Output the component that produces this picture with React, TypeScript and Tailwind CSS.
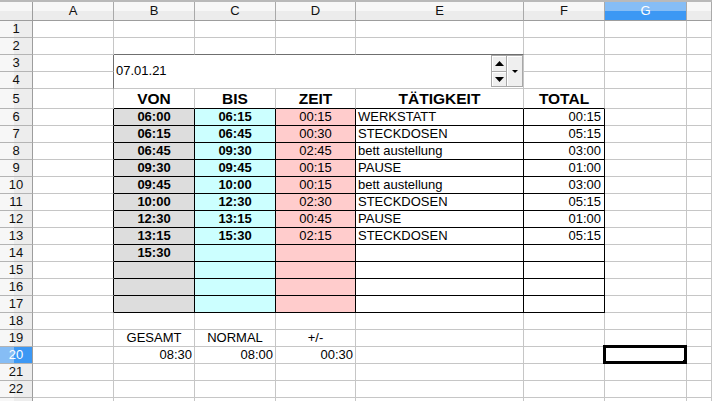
import React from "react";

const COLS = ["A", "B", "C", "D", "E", "F", "G", "H"];

const FONT = "font-['Liberation_Sans',Arial,sans-serif]";

const rows = [
  ["06:00", "06:15", "00:15", "WERKSTATT", "00:15"],
  ["06:15", "06:45", "00:30", "STECKDOSEN", "05:15"],
  ["06:45", "09:30", "02:45", "bett austellung", "03:00"],
  ["09:30", "09:45", "00:15", "PAUSE", "01:00"],
  ["09:45", "10:00", "00:15", "bett austellung", "03:00"],
  ["10:00", "12:30", "02:30", "STECKDOSEN", "05:15"],
  ["12:30", "13:15", "00:45", "PAUSE", "01:00"],
  ["13:15", "15:30", "02:15", "STECKDOSEN", "05:15"],
  ["15:30", "", "", "", ""],
  ["", "", "", "", ""],
  ["", "", "", "", ""],
  ["", "", "", "", ""],
];

function Tri({ dir, w, h }: { dir: "up" | "down"; w: number; h: number }) {
  const d = dir === "up" ? `M0 ${h} L${w / 2} 0 L${w} ${h}Z` : `M0 0 L${w / 2} ${h} L${w} 0Z`;
  return (
    <svg width={w} height={h} viewBox={`0 0 ${w} ${h}`}>
      <path d={d} fill="#000" />
    </svg>
  );
}

function DateBox() {
  return (
    <div className="col-span-4 row-span-2 flex border-r border-b border-r-[#c6c6c6] border-b-[#c6c6c6] bg-white">
      <div className="flex h-[32px] w-full">
        <div className="flex flex-1 items-center pl-[2px] text-[13px] text-black">07.01.21</div>
        <div className="flex h-full w-[32px] gap-px bg-[#a8a8a8] p-px">
          <div className="flex w-[14px] flex-col gap-px">
            <div className="flex flex-1 items-center justify-center border-t border-l border-white bg-[#efefef]">
              <Tri dir="up" w={9} h={5} />
            </div>
            <div className="flex flex-1 items-center justify-center border-t border-l border-white bg-[#efefef]">
              <Tri dir="down" w={9} h={5} />
            </div>
          </div>
          <div className="flex flex-1 items-center justify-center border-t border-l border-white bg-[#efefef]">
            <Tri dir="down" w={6} h={3} />
          </div>
        </div>
      </div>
    </div>
  );
}

function cellFor(r: number, c: number): { cls: string; text?: string } {
  // c: 0=A .. 7=H
  let right = "border-r-[#c6c6c6]";
  let bottom = "border-b-[#c6c6c6]";
  let bg = "bg-white";
  let align = "justify-center";
  let weight = "font-normal";
  let size = "text-[13px]";
  let text = "";

  if (r >= 6 && r <= 17) {
    const row = rows[r - 6];
    if (c === 0) right = "border-r-black";
    if (c >= 1 && c <= 5) {
      right = "border-r-black";
      bottom = "border-b-black";
      text = row[c - 1];
      if (c === 1) {
        bg = "bg-[#dddddd]";
        weight = "font-bold";
      }
      if (c === 2) {
        bg = "bg-[#ccffff]";
        weight = "font-bold";
      }
      if (c === 3) bg = "bg-[#ffcccc]";
      if (c === 4) align = "justify-start pl-[2px]";
      if (c === 5) align = "justify-end pr-[3px]";
    }
  }
  if (r === 5 && c >= 1 && c <= 5) {
    bottom = "border-b-black";
    text = ["VON", "BIS", "ZEIT", "TÄTIGKEIT", "TOTAL"][c - 1];
    weight = "font-bold";
    size = "text-[15.5px]";
  }
  if (r === 2 && c >= 1 && c <= 4) bottom = "border-b-[#6f6f6f]";
  if ((r === 3 || r === 4) && c === 0) right = "border-r-[#6f6f6f]";
  if (r === 19 && c >= 1 && c <= 3) text = ["GESAMT", "NORMAL", "+/-"][c - 1];
  if (r === 20 && c >= 1 && c <= 3) {
    text = ["08:30", "08:00", "00:30"][c - 1];
    align = "justify-end pr-[2px]";
  }

  return { cls: `${right} ${bottom} ${bg} ${align} ${weight} ${size}`, text };
}

export default function App() {
  const cells: React.ReactNode[] = [];

  // column header row
  cells.push(
    <div
      key="corner"
      className="border-r border-b border-r-[#9d9d9d] border-b-[#9d9d9d] bg-[linear-gradient(to_bottom,#f7f7f7_50%,#ececec_50%)]"
    />
  );
  COLS.forEach((col) => {
    const sel = col === "G";
    cells.push(
      <div
        key={`h-${col}`}
        className={`flex items-center justify-center border-r border-b border-r-[#a9a9a9] border-b-[#9d9d9d] text-[13px] ${
          sel
            ? "bg-[linear-gradient(to_bottom,#86bdf5_50%,#3c98f4_50%)] text-white"
            : "bg-[linear-gradient(to_bottom,#f7f7f7_50%,#ececec_50%)] text-[#111]"
        }`}
      >
        {col !== "H" && col}
      </div>
    );
  });

  for (let r = 1; r <= 23; r++) {
    const sel = r === 20;
    cells.push(
      <div
        key={`rh-${r}`}
        className={`flex items-center justify-center border-r border-b border-r-[#9d9d9d] border-b-[#b4b4b4] text-[13px] ${
          sel
            ? "bg-[linear-gradient(to_right,#86bdf5_45%,#3c98f4_45%)] text-white"
            : "bg-[linear-gradient(to_right,#f7f7f7_45%,#ededed_45%)] text-[#111]"
        }`}
      >
        {r < 23 && r}
      </div>
    );
    for (let c = 0; c < COLS.length; c++) {
      if (r === 3 && c === 1) {
        cells.push(<DateBox key="datebox" />);
        continue;
      }
      if ((r === 3 && c >= 2 && c <= 4) || (r === 4 && c >= 1 && c <= 4)) continue;
      const { cls, text } = cellFor(r, c);
      const active = r === 20 && c === 6;
      cells.push(
        <div
          key={`${r}-${c}`}
          className={`relative flex items-center overflow-visible whitespace-nowrap border-r border-b text-black ${cls}`}
        >
          {text}
          {active && (
            <>
              <div className="absolute -top-[2px] -left-[2px] -right-px -bottom-px border-[3px] border-black" />
              <div className="absolute -right-[3px] -bottom-[3px] h-[6px] w-[6px] bg-black" />
            </>
          )}
        </div>
      );
    }
  }

  return (
    <div className={`h-[401px] w-[712px] overflow-hidden bg-white ${FONT}`}>
      <div className="border-t-2 border-t-[#b9b9b9]">
        <div className="grid grid-cols-[33px_81px_81px_81px_80px_168px_81px_82px_1fr] grid-rows-[19px_repeat(4,17px)_20px_repeat(18,17px)]">
          {cells}
        </div>
      </div>
    </div>
  );
}
